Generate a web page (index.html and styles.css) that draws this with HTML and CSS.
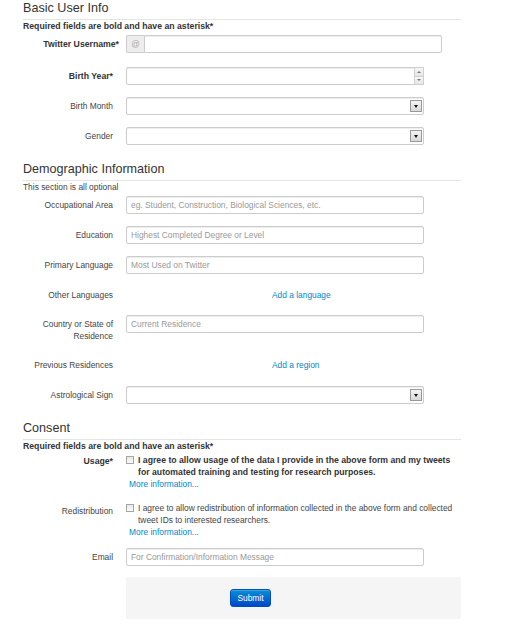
FILE: index.html
```html
<!DOCTYPE html>
<html>
<head>
<meta charset="utf-8">
<link rel="stylesheet" href="styles.css">
</head>
<body>
<div class="page">
  <div class="legend legend-first">Basic User Info</div>
  <p class="note note-bold">Required fields are bold and have an asterisk*</p>

  <div class="row row-twitter">
    <label class="lbl lbl-req lbl-twitter">Twitter Username*</label>
    <div class="ctrl ctrl-wide">
      <div class="prepend"><span class="addon">@</span><input class="inp inp-flat" type="text"></div>
    </div>
  </div>

  <div class="row">
    <label class="lbl lbl-req">Birth Year*</label>
    <div class="ctrl">
      <div class="box">
        <input class="bare" type="text">
        <span class="spin"><span class="spin-btn"><span class="tri-up"></span></span><span class="spin-btn"><span class="tri-down"></span></span></span>
      </div>
    </div>
  </div>

  <div class="row">
    <label class="lbl">Birth Month</label>
    <div class="ctrl">
      <div class="box"><span class="bare"></span><span class="arrow"><span class="tri-down tri-dark"></span></span></div>
    </div>
  </div>

  <div class="row row-last">
    <label class="lbl">Gender</label>
    <div class="ctrl">
      <div class="box"><span class="bare"></span><span class="arrow"><span class="tri-down tri-dark"></span></span></div>
    </div>
  </div>

  <div class="legend">Demographic Information</div>
  <p class="note">This section is all optional</p>

  <div class="row">
    <label class="lbl">Occupational Area</label>
    <div class="ctrl"><input class="inp" type="text" placeholder="eg. Student, Construction, Biological Sciences, etc."></div>
  </div>

  <div class="row">
    <label class="lbl">Education</label>
    <div class="ctrl"><input class="inp" type="text" placeholder="Highest Completed Degree or Level"></div>
  </div>

  <div class="row">
    <label class="lbl">Primary Language</label>
    <div class="ctrl"><input class="inp" type="text" placeholder="Most Used on Twitter"></div>
  </div>

  <div class="row row-text">
    <label class="lbl">Other Languages</label>
    <div class="ctrl ctrl-link"><a class="link" href="#">Add a language</a></div>
  </div>

  <div class="row row-tall">
    <label class="lbl">Country or State of Residence</label>
    <div class="ctrl"><input class="inp" type="text" placeholder="Current Residence"></div>
  </div>

  <div class="row row-text2">
    <label class="lbl">Previous Residences</label>
    <div class="ctrl ctrl-link"><a class="link" href="#">Add a region</a></div>
  </div>

  <div class="row row-last">
    <label class="lbl">Astrological Sign</label>
    <div class="ctrl">
      <div class="box"><span class="bare"></span><span class="arrow"><span class="tri-down tri-dark"></span></span></div>
    </div>
  </div>

  <div class="legend">Consent</div>
  <p class="note note-bold note-flush">Required fields are bold and have an asterisk*</p>

  <div class="row row-check">
    <label class="lbl lbl-req">Usage*</label>
    <div class="ctrl ctrl-check">
      <div class="check"><span class="cbox"></span><span class="check-text check-bold">I agree to allow usage of the data I provide in the above form and my tweets<br>for automated training and testing for research purposes.</span></div>
      <a class="link more" href="#">More information...</a>
    </div>
  </div>

  <div class="row row-check">
    <label class="lbl lbl-low">Redistribution</label>
    <div class="ctrl ctrl-check">
      <div class="check"><span class="cbox"></span><span class="check-text">I agree to allow redistribution of information collected in the above form and collected<br>tweet IDs to interested researchers.</span></div>
      <a class="link more" href="#">More information...</a>
    </div>
  </div>

  <div class="row row-email">
    <label class="lbl">Email</label>
    <div class="ctrl"><input class="inp" type="text" placeholder="For Confirmation/Information Message"></div>
  </div>

  <div class="actions">
    <button class="btn" type="button">Submit</button>
  </div>
</div>
</body>
</html>
```

FILE: styles.css
```css
html, body {
  margin: 0;
  padding: 0;
  background: #fff;
}
body {
  font-family: "Liberation Sans", Arial, sans-serif;
  font-size: 8.4px;
  line-height: 12px;
  color: #444;
}
.page {
  padding-left: 23px;
  width: 438px;
}
.legend {
  height: 22px;
  line-height: 22px;
  font-size: 12.6px;
  color: #333;
  border-bottom: 1px solid #e5e5e5;
}
.legend-first {
  margin-top: -3px;
}
.note {
  margin: 0 0 3px;
}
.note-bold {
  font-weight: bold;
  font-size: 8.7px;
  color: #333;
}
.note-flush {
  margin-bottom: 0;
}
.row {
  display: flex;
  margin-bottom: 12px;
}
.row-twitter {
  margin-bottom: 14px;
}
.row-last {
  margin-bottom: 13px;
}
.row-text {
  height: 17px;
}
.row-text2 {
  height: 18px;
}
.row-tall {
  margin-bottom: 14px;
}
.row-check {
  margin-bottom: 10px;
}
.row-email {
  margin-bottom: 11px;
}
.lbl {
  flex: none;
  width: 90px;
  margin-right: 13px;
  padding-top: 3px;
  text-align: right;
}
.lbl-req {
  font-weight: bold;
  font-size: 8.7px;
  color: #333;
}
.lbl-twitter {
  width: 96px;
  margin-right: 7px;
}
.lbl-low {
  padding-top: 5px;
}
.ctrl {
  width: 298px;
}
.ctrl-wide {
  width: 316px;
}
.ctrl-link {
  padding-top: 3px;
  padding-left: 146px;
  box-sizing: border-box;
}
.link {
  color: #0088cc;
  text-decoration: none;
}
.inp {
  box-sizing: border-box;
  display: block;
  width: 298px;
  height: 18px;
  margin: 0;
  padding: 0 4px;
  border: 1px solid #ccc;
  border-radius: 2px;
  box-shadow: inset 0 1px 1px rgba(0, 0, 0, 0.075);
  font: inherit;
  color: #555;
  background: #fff;
  outline: none;
}
.inp::placeholder {
  color: #999;
}
.prepend {
  display: flex;
}
.addon {
  box-sizing: border-box;
  flex: none;
  width: 18px;
  height: 18px;
  line-height: 16px;
  text-align: center;
  background: #eee;
  border: 1px solid #ccc;
  border-right: 0;
  border-radius: 2px 0 0 2px;
  color: #aaa;
}
.inp-flat {
  flex: 1;
  width: auto;
  border-radius: 0 2px 2px 0;
}
.box {
  box-sizing: border-box;
  display: flex;
  align-items: center;
  width: 298px;
  height: 18px;
  border: 1px solid #ccc;
  border-radius: 2px;
  box-shadow: inset 0 1px 1px rgba(0, 0, 0, 0.075);
  background: #fff;
}
.bare {
  flex: 1;
  min-width: 0;
  height: 100%;
  border: 0;
  padding: 0 4px;
  margin: 0;
  background: transparent;
  font: inherit;
  outline: none;
}
.spin {
  flex: none;
  display: flex;
  flex-direction: column;
  width: 10px;
  height: 18px;
  margin-right: -1px;
}
.spin-btn {
  box-sizing: border-box;
  flex: 1;
  display: flex;
  align-items: center;
  justify-content: center;
  background: linear-gradient(#f7f7f7, #e6e6e6);
  border: 1px solid #cfcfcf;
}
.spin-btn + .spin-btn {
  border-top: 0;
}
.tri-up {
  width: 0;
  height: 0;
  border-left: 2px solid transparent;
  border-right: 2px solid transparent;
  border-bottom: 2px solid #777;
}
.tri-down {
  width: 0;
  height: 0;
  border-left: 2px solid transparent;
  border-right: 2px solid transparent;
  border-top: 2px solid #777;
}
.arrow {
  box-sizing: border-box;
  flex: none;
  display: flex;
  align-items: center;
  justify-content: center;
  width: 12px;
  height: 12px;
  margin-right: 1px;
  border: 1px solid #999;
  background: linear-gradient(#f4f4f4, #d8d8d8);
}
.tri-dark {
  border-left-width: 2.5px;
  border-right-width: 2.5px;
  border-top: 3px solid #111;
}
.ctrl-check {
  width: 340px;
  padding-top: 2px;
}
.check {
  display: flex;
  align-items: flex-start;
}
.cbox {
  box-sizing: border-box;
  flex: none;
  width: 8px;
  height: 8px;
  margin-top: 2px;
  margin-right: 4px;
  border: 1px solid #a6a6a6;
  background: linear-gradient(#e8e8e8, #fafafa);
}
.check-text {
  white-space: nowrap;
}
.check-bold {
  font-weight: bold;
  font-size: 8.7px;
  color: #333;
}
.more {
  display: block;
  padding-left: 3px;
}
.actions {
  box-sizing: border-box;
  margin-left: 103px;
  width: 335px;
  height: 42px;
  padding: 12px 0 12px 104px;
  background: #f5f5f5;
}
.btn {
  box-sizing: border-box;
  display: block;
  width: 41px;
  height: 18px;
  margin: 0;
  padding: 0;
  border: 1px solid #0050b8;
  border-radius: 3px;
  background: linear-gradient(#0a8fd6, #0048c8);
  color: #fff;
  font: inherit;
  line-height: 16px;
  text-align: center;
  box-shadow: inset 0 1px 0 rgba(255, 255, 255, 0.2);
}
```
